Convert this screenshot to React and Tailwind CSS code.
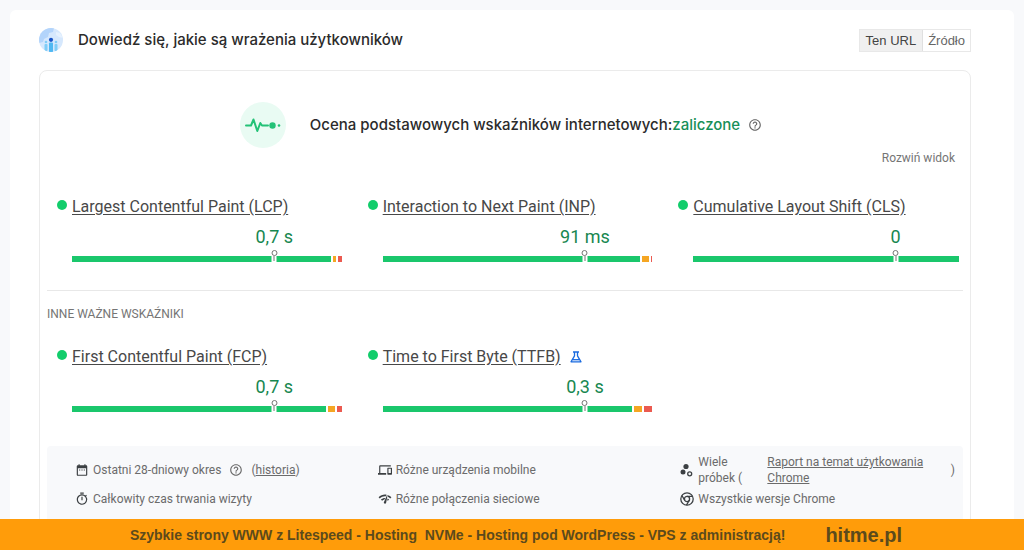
import {
  MdDateRange,
  MdDevices,
  MdHelpOutline,
  MdNetworkCheck,
  MdOutlineTimer,
} from "react-icons/md";

const CORE_METRICS = [
  { name: "Largest Contentful Paint (LCP)", value: "0,7 s", good: 259, medium: 3, poor: 4 },
  { name: "Interaction to Next Paint (INP)", value: "91 ms", good: 258, medium: 7, poor: 1 },
  { name: "Cumulative Layout Shift (CLS)", value: "0", good: 266, medium: 0, poor: 0 },
];

const OTHER_METRICS = [
  { name: "First Contentful Paint (FCP)", value: "0,7 s", good: 254, medium: 7, poor: 5 },
  {
    name: "Time to First Byte (TTFB)",
    value: "0,3 s",
    good: 250,
    medium: 8,
    poor: 8,
    experimental: true,
  },
];

function UsersIcon() {
  return (
    <svg viewBox="0 0 24 24" className="size-6 shrink-0" aria-hidden="true">
      <defs>
        <clipPath id="users-circle">
          <circle cx="12" cy="12" r="12" />
        </clipPath>
      </defs>
      <g clipPath="url(#users-circle)">
        <rect width="24" height="24" fill="#d6e8fd" />
        <path d="M0 0h15l-1 4-4 1-1 4-4 2-1 3-4 1z" fill="#b3d4fb" />
        <path d="M17 4l4 1 3 5-4-1-3-2z" fill="#e6f1fe" />
        <rect x="5.5" y="16" width="3" height="7" rx="1" fill="#7fcdf7" />
        <rect x="10" y="14.500" width="4" height="10" rx="1" fill="#4fb8f2" />
        <rect x="15.500" y="16" width="3" height="7" rx="1" fill="#7fcdf7" />
        <circle cx="7" cy="14" r="1.300" fill="#7fcdf7" />
        <circle cx="17" cy="14" r="1.300" fill="#7fcdf7" />
        <circle cx="12" cy="11.800" r="2.100" fill="#1a56c8" />
      </g>
    </svg>
  );
}

function PulseIcon() {
  return (
    <svg viewBox="0 0 46 46" className="size-[46px] shrink-0" aria-hidden="true">
      <circle cx="23" cy="23" r="23" fill="#e9fbf3" />
      <path
        d="M6 23.500h5l2.500-6 3.800 11.500 3-8 1.700 2.500h6"
        fill="none"
        stroke="#23c277"
        strokeWidth="2"
        strokeLinejoin="round"
        strokeLinecap="round"
      />
      <circle cx="32.500" cy="23.500" r="3.200" fill="#23c277" />
      <circle cx="39" cy="23.500" r="1.300" fill="#23c277" />
    </svg>
  );
}

function FlaskIcon() {
  return (
    <svg
      viewBox="0 0 12 12"
      className="ml-1 size-3 shrink-0"
      fill="none"
      stroke="#1a6be0"
      strokeWidth="1.300"
      strokeLinejoin="round"
      aria-hidden="true"
    >
      <path d="M3 1h6M4.500 1v3.800L1 10.800h10L7.500 4.800V1" />
      <path d="M3 8.700h6" />
    </svg>
  );
}

function SamplesIcon() {
  return (
    <svg viewBox="0 0 14 14" className="size-3.5 shrink-0" aria-hidden="true">
      <circle cx="6" cy="3.500" r="2.600" fill="#3c4043" />
      <circle cx="3" cy="9" r="2.500" fill="#3c4043" />
      <circle cx="9.700" cy="10.800" r="2" fill="none" stroke="#3c4043" strokeWidth="1.300" />
    </svg>
  );
}

function ChromeIcon() {
  return (
    <svg
      viewBox="0 0 14 14"
      className="size-3.5 shrink-0"
      fill="none"
      stroke="#3c4043"
      strokeWidth="1.300"
      aria-hidden="true"
    >
      <circle cx="7" cy="7" r="6.200" />
      <circle cx="7" cy="7" r="2.600" />
      <path d="M7 4.400h5.600M4.750 8.300L1.900 3.500M9.250 8.300L6.500 13.100" />
    </svg>
  );
}

function Marker() {
  return (
    <span className="absolute bottom-0 left-3/4 flex w-[5px] -translate-x-1/2 flex-col items-center">
      <span className="h-1.5 w-1.5 shrink-0 rounded-full border border-[#757575] bg-white" />
      <span className="flex h-1.5 w-[5px] justify-center bg-white">
        <span className="h-[5px] w-px bg-[#757575]" />
      </span>
    </span>
  );
}

function Metric({ name, value, good, medium, poor, experimental }) {
  return (
    <div className="min-w-0">
      <div className="flex h-5 items-center gap-[5px] pl-2.5">
        <span className="mb-1 size-2.5 shrink-0 rounded-full bg-[#12cd6b]" />
        <a href="#" className="text-base leading-5 whitespace-nowrap text-[#484848] underline underline-offset-2">
          {name}
        </a>
        {experimental && <FlaskIcon />}
      </div>
      <div className="ml-[25px]">
        <div className="mt-2 grid grid-cols-2">
          <div className="col-start-2 text-center text-lg leading-6 text-[#178750]">{value}</div>
        </div>
        <div className="relative mt-[7px] flex h-1.5 gap-0.5">
          <span className="bg-[#1ac76c]" style={{ flexGrow: good }} />
          <span className="bg-[#f5a623]" style={{ flexGrow: medium }} />
          <span className="bg-[#eb5a50]" style={{ flexGrow: poor }} />
          <Marker />
        </div>
      </div>
    </div>
  );
}

export default function App() {
  return (
    <div className="flex h-screen flex-col bg-[#f8f9fb] font-['Roboto','Liberation_Sans',sans-serif] text-[#202124]">
      <main className="min-h-0 flex-1 overflow-hidden px-2.5 pt-2.5">
        <div className="rounded-md bg-white pr-[43px] pl-[29px]">
          <header className="flex h-[60px] items-center gap-[15px]">
            <UsersIcon />
            <h1 className="font-['Inter','Liberation_Sans',sans-serif] text-[15px] font-medium text-[#2b2b2b]">
              Dowiedź się, jakie są wrażenia użytkowników
            </h1>
            <div className="ml-auto flex border border-[#e8e8e8] font-['Liberation_Sans',sans-serif] text-[13px] leading-[21px] text-[#444]">
              <button type="button" aria-pressed="true" className="border-r border-[#e0e0e0] bg-[#f0f0f0] px-1.5">
                Ten URL
              </button>
              <button type="button" aria-pressed="false" className="bg-white px-[5px] text-[#666]">
                Źródło
              </button>
            </div>
          </header>

          <section className="rounded-lg border border-[#ebebeb] px-[7px] pt-[31px] pb-10">
            <div className="flex items-center justify-center gap-6 pr-2">
              <PulseIcon />
              <div className="flex items-center gap-2">
                <h2 className="font-['Inter','Liberation_Sans',sans-serif] text-[15px] font-medium text-[#2b2b2b]">
                  Ocena podstawowych wskaźników internetowych:
                  <span className="text-[#178f58]">zaliczone</span>
                </h2>
                <MdHelpOutline className="size-3.5 text-[#666]" />
              </div>
            </div>

            <div className="mt-0.5 flex justify-end pr-2">
              <button type="button" className="text-xs leading-4 text-[#757575]">
                Rozwiń widok
              </button>
            </div>

            <div className="mt-[31px] grid grid-cols-3 gap-4">
              {CORE_METRICS.map((metric) => (
                <Metric key={metric.name} {...metric} />
              ))}
            </div>

            <hr className="mt-7 border-[#e8e8e8]" />
            <h3 className="mt-[15px] text-xs leading-4 text-[#757575]">INNE WAŻNE WSKAŹNIKI</h3>

            <div className="mt-[25px] grid grid-cols-3 gap-4">
              {OTHER_METRICS.map((metric) => (
                <Metric key={metric.name} {...metric} />
              ))}
            </div>

            <div className="mt-[34px] grid grid-cols-3 gap-x-7 rounded bg-[#f8f9fb] pt-2 pr-2 pb-6 pl-7 text-xs leading-4 text-[#6b6b6b]">
              <div className="flex h-8 items-center gap-1">
                <MdDateRange className="size-3.5 shrink-0 text-[#3c4043]" />
                <span>Ostatni 28-dniowy okres</span>
                <MdHelpOutline className="mx-1 size-3.5 shrink-0" />
                <span>
                  (
                  <a href="#" className="underline">
                    historia
                  </a>
                  )
                </span>
              </div>
              <div className="flex h-8 items-center gap-1">
                <MdDevices className="size-3.5 shrink-0 text-[#3c4043]" />
                <span>Różne urządzenia mobilne</span>
              </div>
              <div className="flex h-8 items-center gap-1">
                <SamplesIcon />
                <span className="w-[65px] shrink-0 pr-4">Wiele próbek (</span>
                <a href="#" className="min-w-0 flex-1 underline">
                  Raport na temat użytkowania Chrome
                </a>
                <span>)</span>
              </div>
              <div className="flex h-[26px] items-center gap-1">
                <MdOutlineTimer className="size-3.5 shrink-0 text-[#3c4043]" />
                <span>Całkowity czas trwania wizyty</span>
              </div>
              <div className="flex h-[26px] items-center gap-1">
                <MdNetworkCheck className="size-3.5 shrink-0 text-[#3c4043]" />
                <span>Różne połączenia sieciowe</span>
              </div>
              <div className="flex h-[26px] items-center gap-1">
                <ChromeIcon />
                <span>Wszystkie wersje Chrome</span>
              </div>
            </div>
          </section>
        </div>
      </main>

      <footer className="flex h-[31px] shrink-0 items-center justify-center gap-10 bg-[#ff9c0a] pl-2 font-['Liberation_Sans',sans-serif] font-bold text-[#5c4a1c]">
        <p className="text-sm whitespace-pre">
          {"Szybkie strony WWW z Litespeed - Hosting  NVMe - Hosting pod WordPress - VPS z administracją!"}
        </p>
        <a href="#" className="text-xl leading-6">
          hitme.pl
        </a>
      </footer>
    </div>
  );
}
